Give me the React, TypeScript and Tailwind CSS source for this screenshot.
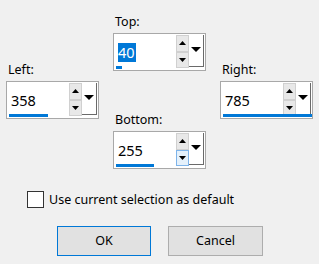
import React from "react";

function UpTri() {
  return (
    <svg width="7" height="4" viewBox="0 0 7 4">
      <polygon points="0,4 7,4 3.5,0" fill="#000" />
    </svg>
  );
}
function DownTri({ w = 7, h = 4 }: { w?: number; h?: number }) {
  return (
    <svg width={w} height={h} viewBox={`0 0 ${w} ${h}`}>
      <polygon points={`0,0 ${w},0 ${w / 2},${h}`} fill="#000" />
    </svg>
  );
}

function Spin({
  label,
  value,
  bar,
  selected = false,
  hoverDown = false,
}: {
  label: string;
  value: string;
  bar: number;
  selected?: boolean;
  hoverDown?: boolean;
}) {
  return (
    <div className="flex flex-col w-[93px]">
      <div className="h-[16px] leading-[16px] text-[12.5px] pl-[2px] text-black">{label}</div>
      <div className="mt-[3px] h-[38px] border border-[#a8a8a8] bg-white flex relative">
        <div className="flex-1 flex items-center pl-[4px] text-[14.5px] text-black">
          {selected ? (
            <span className="bg-[#0078d7] text-white leading-[19px] pr-[1px]">{value}</span>
          ) : (
            <span className="leading-[19px]">{value}</span>
          )}
        </div>
        <div className="w-[13px] flex flex-col pt-[1px] pb-[2px]">
          <div className="flex-1 border border-[#d0d0d0] bg-[#e8e8e8] flex items-center justify-center">
            <UpTri />
          </div>
          <div
            className={
              hoverDown
                ? "flex-1 border border-[#7eb4ea] bg-[#e5f1fb] flex items-center justify-center"
                : "flex-1 border border-[#d0d0d0] bg-[#e8e8e8] flex items-center justify-center"
            }
          >
            <DownTri />
          </div>
        </div>
        <div className="w-[16px] pt-[1px] pb-[3px] pr-[1px]">
          <div className="h-full border-r border-b border-[#6a6a6a] flex justify-center pt-[12px]">
            <DownTri w={10} h={5} />
          </div>
        </div>
        <div className="absolute left-[2px] bottom-[1px] h-[3px] bg-[#0078d7]" style={{ width: bar }} />
      </div>
    </div>
  );
}

export default function App() {
  return (
    <div className="w-[319px] h-[264px] bg-[#f0f0f0] font-['Noto_Sans',sans-serif] overflow-hidden">
      <div className="flex justify-between px-[6px] pt-[14px]">
        <div className="mt-[48px]">
          <Spin label="Left:" value="358" bar={39} />
        </div>
        <div className="flex flex-col">
          <Spin label="Top:" value="40" bar={6} selected />
          <div className="mt-[41px]">
            <Spin label="Bottom:" value="255" bar={38} hoverDown />
          </div>
        </div>
        <div className="mt-[48px]">
          <Spin label="Right:" value="785" bar={89} />
        </div>
      </div>
      <div className="flex items-center pl-[27px] mt-[22px]">
        <div className="w-[17px] h-[17px] border border-[#333333] bg-white" />
        <span className="ml-[5px] text-[12.5px] text-black leading-[17px]">Use current selection as default</span>
      </div>
      <div className="flex pl-[57px] mt-[18px] gap-[17px]">
        <div className="w-[94px] h-[30px] border border-[#0078d7] bg-[#e1e1e1] flex items-center justify-center text-[12.5px] text-black">
          OK
        </div>
        <div className="w-[95px] h-[30px] border border-[#adadad] bg-[#e1e1e1] flex items-center justify-center text-[12.5px] text-black">
          Cancel
        </div>
      </div>
    </div>
  );
}
